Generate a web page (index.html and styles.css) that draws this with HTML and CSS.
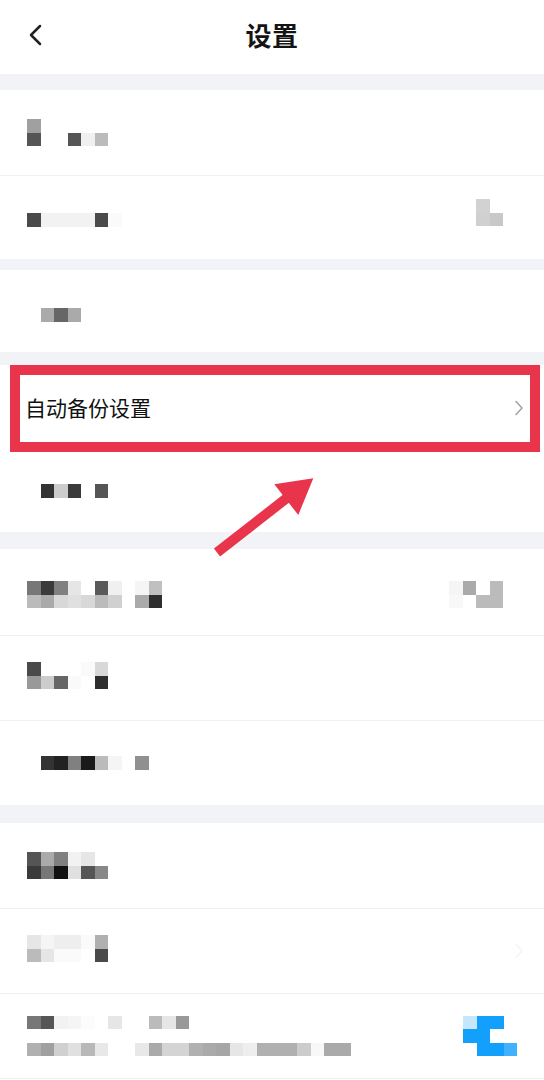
FILE: index.html
```html
<!DOCTYPE html>
<html lang="zh-CN">
<head>
<meta charset="utf-8">
<title>设置</title>
<link rel="stylesheet" href="styles.css">
</head>
<body>
<div class="page">
  <header class="topbar">
    <div class="back">
      <svg width="14" height="22" viewBox="0 0 14 22"><path d="M12 2 L3 11 L12 20" fill="none" stroke="#222" stroke-width="2.5" stroke-linecap="round" stroke-linejoin="round"/></svg>
    </div>
    <h1 class="title">设置</h1>
    <div></div>
  </header>

  <div class="band h16"></div>
  <section class="group">
    <div class="row h85">
      <div class="mosaic">
        <div class="mrow"><i class="ca0"></i><i></i><i></i><i></i><i></i><i></i></div>
        <div class="mrow"><i class="c55"></i><i></i><i></i><i class="c55"></i><i class="cf0"></i><i class="cbb"></i></div>
      </div>
    </div>
    <div class="row h84 line">
      <div class="mosaic drop3">
        <div class="mrow"><i class="c4a"></i><i class="cf2"></i><i class="cf2"></i><i class="cf2"></i><i class="cf2"></i><i class="c4a"></i><i class="cfa"></i></div>
      </div>
      <div class="mosaic lift5">
        <div class="mrow"><i class="cd2"></i><i></i></div>
        <div class="mrow"><i class="cd0"></i><i class="cc8"></i></div>
      </div>
    </div>
  </section>

  <div class="band h11"></div>
  <section class="group">
    <div class="row h82">
      <div class="mosaic drop4">
        <div class="mrow"><i></i><i class="caa"></i><i class="c66"></i><i class="caa"></i></div>
      </div>
    </div>
  </section>

  <div class="band h13"></div>
  <section class="group">
    <div class="row h85 target">
      <span class="label">自动备份设置</span>
      <svg class="chev" width="10" height="16" viewBox="0 0 10 16"><path d="M2 1.5 L8 8 L2 14.5" fill="none" stroke="#a3a3a3" stroke-width="1.6" stroke-linecap="round" stroke-linejoin="round"/></svg>
      <div class="callout"></div>
    </div>
    <div class="row h82">
      <div class="mosaic">
        <div class="mrow"><i></i><i class="c33"></i><i class="ccc"></i><i class="c3a"></i><i></i><i class="c55"></i></div>
      </div>
    </div>
  </section>

  <div class="band h17"></div>
  <section class="group">
    <div class="row h86">
      <div class="mosaic drop2">
        <div class="mrow"><i class="c77"></i><i class="c3a"></i><i class="c80"></i><i class="ce6"></i><i></i><i class="c5a"></i><i class="cf0"></i><i></i><i class="cf5"></i><i class="cc0"></i></div>
        <div class="mrow"><i class="cbb"></i><i class="caa"></i><i class="cd8"></i><i class="ce0"></i><i class="cd8"></i><i class="cbb"></i><i class="cd0"></i><i></i><i class="caa"></i><i class="c2e"></i></div>
      </div>
      <div class="mosaic drop2">
        <div class="mrow"><i class="cf5"></i><i class="caa"></i><i></i><i class="cbb"></i></div>
        <div class="mrow"><i class="cf8"></i><i></i><i class="cbb"></i><i class="cbb"></i></div>
      </div>
    </div>
    <div class="row h85 line">
      <div class="mosaic lift2">
        <div class="mrow"><i class="c4a"></i><i></i><i></i><i></i><i class="cfa"></i><i class="cd8"></i></div>
        <div class="mrow"><i class="c99"></i><i class="ccc"></i><i class="c66"></i><i class="cfa"></i><i></i><i class="c2e"></i></div>
      </div>
    </div>
    <div class="row h85 line">
      <div class="mosaic">
        <div class="mrow"><i></i><i class="c33"></i><i class="c22"></i><i class="c80"></i><i class="c1a"></i><i class="cbb"></i><i class="cf5"></i><i></i><i class="c90"></i></div>
      </div>
    </div>
  </section>

  <div class="band h18"></div>
  <section class="group">
    <div class="row h85">
      <div class="mosaic">
        <div class="mrow"><i class="c55"></i><i class="caa"></i><i class="c80"></i><i class="cf2"></i><i class="ce6"></i><i></i></div>
        <div class="mrow"><i class="c3a"></i><i class="c77"></i><i class="c11"></i><i class="ce0"></i><i class="c55"></i><i class="c88"></i></div>
      </div>
    </div>
    <div class="row h85 line pr20">
      <div class="mosaic lift2">
        <div class="mrow"><i class="ce6"></i><i class="cf5"></i><i class="cee"></i><i class="cee"></i><i class="cfa"></i><i class="cb0"></i></div>
        <div class="mrow"><i class="cbb"></i><i class="ce6"></i><i class="cfa"></i><i class="cfa"></i><i></i><i class="c4a"></i></div>
      </div>
      <svg class="chev" width="10" height="16" viewBox="0 0 10 16"><path d="M2 1.5 L8 8 L2 14.5" fill="none" stroke="#f3f3f3" stroke-width="1.4" stroke-linecap="round" stroke-linejoin="round"/></svg>
    </div>
    <div class="row h85 line pr27 last">
      <div class="mosaic">
        <div class="mrow"><i class="c77"></i><i class="c55"></i><i class="cf2"></i><i class="cf5"></i><i class="cfc"></i><i></i><i class="ce6"></i><i></i><i></i><i class="cbb"></i><i class="ce6"></i><i class="c99"></i></div>
        <div class="mrow"><i></i></div>
        <div class="mrow"><i class="cb0"></i><i class="ca0"></i><i class="cd0"></i><i class="ce0"></i><i class="cb8"></i><i class="ce8"></i><i></i><i></i><i class="ce8"></i><i class="caa"></i><i class="cd4"></i><i class="cd4"></i><i class="cb0"></i><i class="caa"></i><i class="ca6"></i><i class="ce6"></i><i class="cee"></i><i class="cb0"></i><i class="cb0"></i><i class="cb0"></i><i class="ccc"></i><i class="cf8"></i><i class="caa"></i><i class="caa"></i></div>
      </div>
      <div class="mosaic">
        <div class="mrow"><i class="bl1"></i><i class="bl2"></i><i class="bl2"></i><i></i></div>
        <div class="mrow"><i class="bl2"></i><i class="bl2"></i><i></i><i></i></div>
        <div class="mrow"><i></i><i class="bl2"></i><i class="bl2"></i><i class="bl3"></i></div>
      </div>
    </div>
  </section>

  <svg class="arrow" width="130" height="95" viewBox="0 0 130 95">
    <line x1="17" y1="82.5" x2="92" y2="24" stroke="#e8354b" stroke-width="10"/>
    <polygon points="74.3,14.3 113.3,8.3 98.3,45" fill="#e8354b"/>
  </svg>
</div>
</body>
</html>
```

FILE: styles.css
```css
* { box-sizing: border-box; }

html, body {
  margin: 0;
  padding: 0;
  background: #ffffff;
}

body {
  font-family: "Noto Sans CJK SC", "Noto Sans", "DejaVu Sans", sans-serif;
  color: #111111;
}

.page {
  position: relative;
  width: 544px;
  min-height: 1080px;
  background: #ffffff;
}

/* header */
.topbar {
  height: 74px;
  padding-bottom: 4px;
  display: grid;
  grid-template-columns: 70px 1fr 70px;
  align-items: center;
}

.back {
  padding-left: 28px;
  display: flex;
  align-items: center;
}

.back svg { display: block; }

.title {
  margin: 0;
  text-align: center;
  font-size: 26px;
  font-weight: 700;
  line-height: 1;
  color: #141414;
  letter-spacing: 0.5px;
}

/* section separators */
.band { background: #f2f3f7; }
.h11 { height: 11px; }
.h13 { height: 13px; }
.h16 { height: 16px; }
.h17 { height: 17px; }
.h18 { height: 18px; }

.group { background: #ffffff; }

.row {
  display: flex;
  align-items: center;
  justify-content: space-between;
  padding: 0 41px 0 27px;
}

.h82 { height: 82px; }
.h84 { height: 84px; }
.h85 { height: 85px; }
.h86 { height: 86px; }

.line { border-top: 1px solid #f0f0f0; }
.last { border-bottom: 1px solid #f0f0f0; height: 86px; }

.pr20 { padding-right: 20px; }
.pr27 { padding-right: 27px; }

/* pixelated (mosaic) text */
.mosaic {
  display: flex;
  flex-direction: column;
  flex: none;
}

.mrow {
  display: flex;
  height: 13.5px;
}

.mrow i {
  display: block;
  flex: none;
  width: 13.5px;
  height: 13.5px;
}

.drop2 { margin-top: 5px; }
.drop3 { margin-top: 5px; }
.drop4 { margin-top: 8px; }
.lift2 { margin-bottom: 5px; }
.lift5 { margin-bottom: 10px; }

.c11 { background: #111111; }
.c1a { background: #1a1a1a; }
.c22 { background: #222222; }
.c2e { background: #2e2e2e; }
.c33 { background: #333333; }
.c3a { background: #3a3a3a; }
.c4a { background: #4a4a4a; }
.c55 { background: #555555; }
.c5a { background: #5a5a5a; }
.c66 { background: #666666; }
.c77 { background: #777777; }
.c80 { background: #808080; }
.c88 { background: #888888; }
.c90 { background: #909090; }
.c99 { background: #999999; }
.ca0 { background: #a0a0a0; }
.ca6 { background: #a6a6a6; }
.caa { background: #aaaaaa; }
.cb0 { background: #b0b0b0; }
.cb8 { background: #b8b8b8; }
.cbb { background: #bbbbbb; }
.cc0 { background: #c0c0c0; }
.cc8 { background: #c8c8c8; }
.ccc { background: #cccccc; }
.cd0 { background: #d0d0d0; }
.cd2 { background: #d2d2d2; }
.cd4 { background: #d4d4d4; }
.cd8 { background: #d8d8d8; }
.ce0 { background: #e0e0e0; }
.ce6 { background: #e6e6e6; }
.ce8 { background: #e8e8e8; }
.cee { background: #eeeeee; }
.cf0 { background: #f0f0f0; }
.cf2 { background: #f2f2f2; }
.cf5 { background: #f5f5f5; }
.cf8 { background: #f8f8f8; }
.cfa { background: #fafafa; }
.cfc { background: #fcfcfc; }

.bl1 { background: #c6e6fb; }
.bl2 { background: #12a0fc; }
.bl3 { background: #40b2fb; }

/* highlighted row */
.target {
  position: relative;
  padding: 0 20px 0 25px;
}

.label {
  font-size: 21px;
  line-height: 1;
  color: #111111;
}

.chev { display: block; flex: none; }

.callout {
  position: absolute;
  left: 10px;
  right: 4px;
  top: 0;
  height: 87px;
  border: 10.5px solid #e8354b;
  pointer-events: none;
}

.arrow {
  position: absolute;
  left: 200px;
  top: 470px;
  display: block;
}
```
